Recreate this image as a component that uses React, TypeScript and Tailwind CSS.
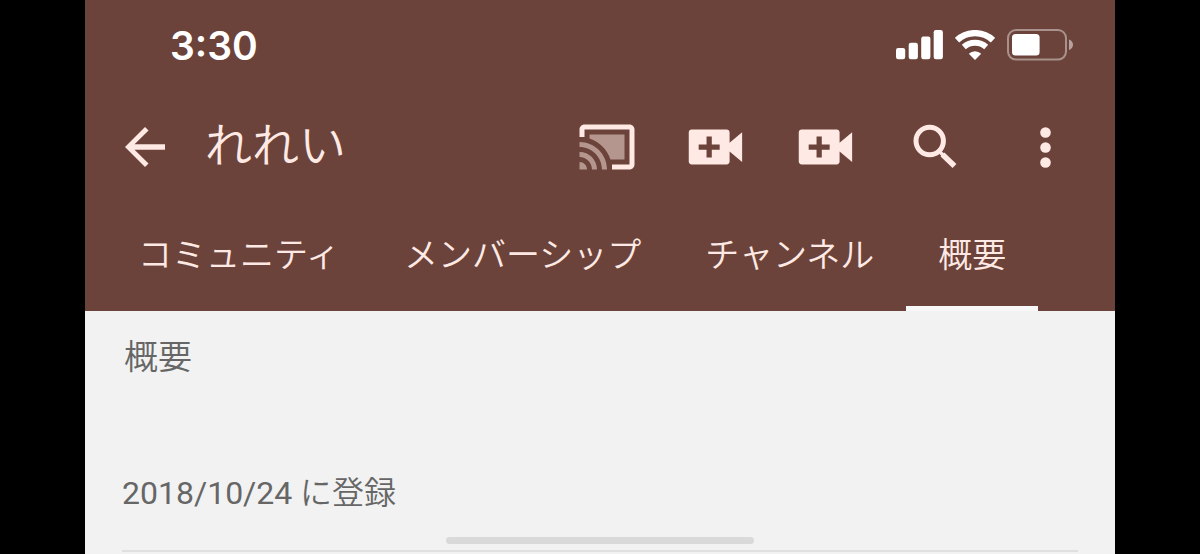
import { useState } from "react";
import type { ReactNode } from "react";

const tabs = ["コミュニティ", "メンバーシップ", "チャンネル", "概要"];

function SignalIcon() {
  return (
    <svg width="47" height="30" viewBox="0 0 47 30" fill="currentColor" aria-hidden="true">
      <rect x="0" y="18" width="9.2" height="11.3" rx="2.2" />
      <rect x="12.7" y="12.7" width="9.2" height="16.6" rx="2.2" />
      <rect x="25.2" y="6.5" width="9.2" height="22.8" rx="2.2" />
      <rect x="37.7" y="0" width="9.2" height="29.3" rx="2.2" />
    </svg>
  );
}

function WifiIcon() {
  return (
    <svg width="40" height="30" viewBox="0 0 40 30" fill="none" stroke="currentColor" aria-hidden="true">
      <path d="M2 10.2A26.500 26.500 0 0 1 38 10.200" strokeWidth="6.400" />
      <path d="M8.800 17A17 17 0 0 1 31.200 17" strokeWidth="6" />
      <path d="M20 30l-6.200-6.200a8.800 8.800 0 0 1 12.400 0z" fill="currentColor" stroke="none" />
    </svg>
  );
}

function BatteryIcon() {
  return (
    <svg width="66" height="32" viewBox="0 0 66 32" aria-hidden="true">
      <rect x="1" y="1" width="58" height="29.6" rx="8" fill="none" stroke="#fff" strokeOpacity=".42" strokeWidth="2" />
      <rect x="5" y="5" width="27.6" height="21.6" rx="3.6" fill="#fff" />
      <path d="M62 10.600c2.400.8 4 2.800 4 5.200s-1.600 4.400-4 5.200z" fill="#fff" fillOpacity=".5" />
    </svg>
  );
}

function BackIcon() {
  return (
    <svg width="60" height="60" viewBox="0 0 24 24" fill="currentColor" aria-hidden="true">
      <path d="M20 10.900H7.830l5.590-5.490L12 4l-8 8 8 8 1.410-1.410L7.830 13.100H20v-2.200z" />
    </svg>
  );
}

function CastIcon() {
  return (
    <svg width="60" height="60" viewBox="-0.8 0 24 24" overflow="visible" fill="currentColor" aria-hidden="true">
      <path d="M21 3H3c-1.100 0-2 .9-2 2v3h2V5h18v14h-7v2h7c1.100 0 2-.9 2-2V5c0-1.100-.9-2-2-2z" />
      <path
        opacity=".5"
        d="M19 7H5v1.630c3.960 1.280 7.090 4.410 8.370 8.370H19V7zM1 18v3h3c0-1.660-1.340-3-3-3zM1 14v2c2.760 0 5 2.240 5 5h2c0-3.870-3.130-7-7-7zM1 10v2c4.970 0 9 4.030 9 9h2c0-6.080-4.930-11-11-11z"
      />
    </svg>
  );
}

function VideoAddIcon() {
  return (
    <svg width="70" height="70" viewBox="0 0 24 24" fill="currentColor" aria-hidden="true">
      <path d="M17 10.500V7c0-.55-.45-1-1-1H4c-.55 0-1 .45-1 1v10c0 .55.45 1 1 1h12c.55 0 1-.45 1-1v-3.500l4.300 3.600V6.900L17 10.500zM13.600 12.900h-2.700v2.700H9.100v-2.700H6.400v-1.800h2.700V8.400h1.800v2.700h2.700v1.800z" />
    </svg>
  );
}

function SearchIcon() {
  return (
    <svg width="48" height="48" viewBox="0 0 48 48" fill="none" stroke="currentColor" strokeWidth="5" aria-hidden="true">
      <circle cx="18.700" cy="18" r="13.700" />
      <path d="M28 28l4 4" strokeWidth="3.500" />
      <path d="M31.500 31.500L43.500 43" strokeWidth="5.600" strokeLinecap="butt" />
    </svg>
  );
}

function MoreIcon() {
  return (
    <svg width="48" height="48" viewBox="0 0 48 48" fill="currentColor" aria-hidden="true">
      <circle cx="24.500" cy="9.500" r="5.300" />
      <circle cx="24.500" cy="24.500" r="5.300" />
      <circle cx="24.500" cy="39.500" r="5.300" />
    </svg>
  );
}

function ToolButton({ label, children }: { label: string; children: ReactNode }) {
  return (
    <button type="button" aria-label={label} className="flex h-20 w-[110px] items-center justify-center">
      {children}
    </button>
  );
}

export default function App() {
  const [active, setActive] = useState(3);

  return (
    <div className="min-h-screen bg-black px-[85px] font-['Roboto','Noto_Sans_CJK_JP',sans-serif]">
      <div className="flex min-h-screen flex-col bg-[#f2f2f2]">
        <header className="bg-[#6b433a] text-[#ffe9e4]">
          <div className="flex h-[90px] items-center justify-between pr-[42px] pl-[85px] text-white">
            <time className="font-['Inter',sans-serif] text-[39px] leading-none font-semibold">3:30</time>
            <div className="flex items-center gap-3">
              <SignalIcon />
              <WifiIcon />
              <BatteryIcon />
            </div>
          </div>

          <div className="flex h-[114px] items-center justify-between pr-[15px] pl-[30px]">
            <div className="flex items-center gap-[30px]">
              <button type="button" aria-label="戻る">
                <BackIcon />
              </button>
              <h1 className="pb-1 text-[47px] leading-none font-[350]">れれい</h1>
            </div>
            <div className="flex">
              <ToolButton label="キャスト"><CastIcon /></ToolButton>
              <ToolButton label="動画を追加"><VideoAddIcon /></ToolButton>
              <ToolButton label="動画を作成"><VideoAddIcon /></ToolButton>
              <ToolButton label="検索"><SearchIcon /></ToolButton>
              <ToolButton label="その他"><MoreIcon /></ToolButton>
            </div>
          </div>

          <nav className="flex h-[107px] pl-[21px]">
            {tabs.map((tab, i) => (
              <button
                key={tab}
                type="button"
                aria-current={i === active ? "page" : undefined}
                onClick={() => setActive(i)}
                className={`border-b-5 px-8 text-[34px] leading-none font-[350] whitespace-nowrap ${
                  i === active ? "border-b-[#f8f8f8]" : "border-b-transparent"
                }`}
              >
                {tab}
              </button>
            ))}
          </nav>
        </header>

        <main className="flex grow flex-col px-[37px] text-[#666666]">
          <h2 className="pt-5 pl-0.5 text-[34px] leading-[52px] font-[350]">概要</h2>
          <p className="mt-[84px] text-[32px] leading-[52px] font-[350]">
            <span className="font-normal">2018/10/24</span> に登録
          </p>
          <div className="mx-auto mt-[18px] h-[7px] w-[308px] rounded-full bg-[#d9d9d9]" />
          <hr className="mt-1.5 border-t-2 border-[#e0e0e0]" />
        </main>
      </div>
    </div>
  );
}
